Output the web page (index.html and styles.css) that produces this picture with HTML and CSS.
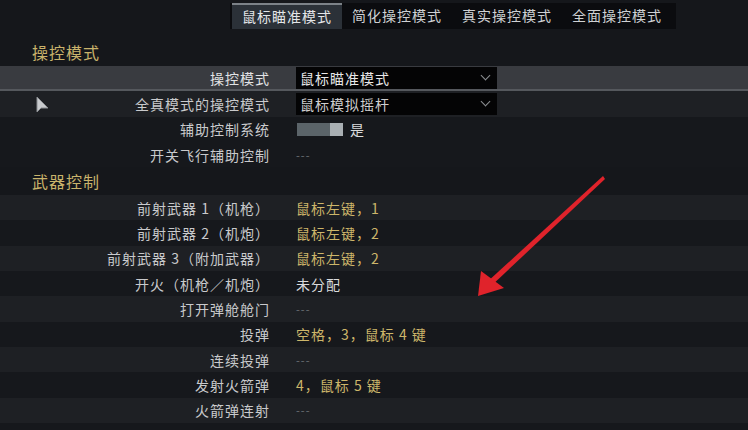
FILE: index.html
```html
<!DOCTYPE html>
<html lang="zh-CN">
<head>
    <meta charset="UTF-8">
    <title>操控设置</title>
    <link rel="stylesheet" href="styles.css">
</head>
<body>
    <div class="screen">
        <div class="tabbar">
            <div class="tabs">
                <div class="tab active">鼠标瞄准模式</div>
                <div class="tab">简化操控模式</div>
                <div class="tab">真实操控模式</div>
                <div class="tab">全面操控模式</div>
            </div>
        </div>

        <div class="section">操控模式</div>
        <div class="row hover">
            <div class="label">操控模式</div>
            <div class="value"><div class="select">鼠标瞄准模式<span class="chev"></span></div></div>
        </div>
        <div class="row odd">
            <div class="label">全真模式的操控模式</div>
            <div class="value"><div class="select dim">鼠标模拟摇杆<span class="chev"></span></div></div>
        </div>
        <div class="row">
            <div class="label">辅助控制系统</div>
            <div class="value"><span class="toggle"><span class="knob"></span></span><span class="plain">是</span></div>
        </div>
        <div class="row">
            <div class="label">开关飞行辅助控制</div>
            <div class="value none">---</div>
        </div>

        <div class="section">武器控制</div>
        <div class="row odd">
            <div class="label">前射武器 1（机枪）</div>
            <div class="value key">鼠标左键，1</div>
        </div>
        <div class="row">
            <div class="label">前射武器 2（机炮）</div>
            <div class="value key">鼠标左键，2</div>
        </div>
        <div class="row odd">
            <div class="label">前射武器 3（附加武器）</div>
            <div class="value key">鼠标左键，2</div>
        </div>
        <div class="row">
            <div class="label">开火（机枪／机炮）</div>
            <div class="value plain">未分配</div>
        </div>
        <div class="row odd">
            <div class="label">打开弹舱舱门</div>
            <div class="value none">---</div>
        </div>
        <div class="row">
            <div class="label">投弹</div>
            <div class="value key">空格，3，鼠标 4 键</div>
        </div>
        <div class="row odd">
            <div class="label">连续投弹</div>
            <div class="value none">---</div>
        </div>
        <div class="row">
            <div class="label">发射火箭弹</div>
            <div class="value key">4，鼠标 5 键</div>
        </div>
        <div class="row odd">
            <div class="label">火箭弹连射</div>
            <div class="value none">---</div>
        </div>
        <div class="row">
            <div class="label">选择火箭弹类型</div>
            <div class="value plain">未分配</div>
        </div>

        <svg class="cursor" width="16" height="20" viewBox="0 0 16 20">
            <path d="M2 2 L2 17 L6 13 L13 13 Z" fill="#c9cbce" stroke="#8a8d91" stroke-width="1"/>
        </svg>

        <svg class="arrow" width="748" height="430" viewBox="0 0 748 430">
            <path d="M603 176 L605 179 L490 287 L486 283 Z" fill="#e0232b"/>
            <path d="M478 296 L481 271 L504 288 Z" fill="#e0232b"/>
        </svg>
    </div>
</body>
</html>
```

FILE: styles.css
```css
* {
    box-sizing: border-box;
}

body {
    margin: 0;
    background-color: #15171b;
    font-family: "Noto Sans CJK SC", "Noto Sans", sans-serif;
    font-size: 14px;
    letter-spacing: 1px;
    color: #c9cacc;
}

.screen {
    position: relative;
    width: 748px;
    height: 430px;
    overflow: hidden;
}

.tabbar {
    height: 38px;
    padding-top: 3px;
    padding-left: 230px;
}

.tabs {
    display: flex;
    width: 446px;
    height: 26px;
    background-color: #0b0c0f;
    padding-left: 2px;
}

.tab {
    width: 110px;
    height: 26px;
    line-height: 24px;
    text-align: center;
    color: #cfd1d3;
    font-size: 14px;
}

.tab.active {
    background-color: #2b3138;
    border-top: 2px solid #7c8288;
    line-height: 22px;
    color: #e4e6e8;
}

.section {
    height: 28px;
    line-height: 28px;
    padding-left: 32px;
    font-size: 16px;
    color: #c9b36b;
}

.row {
    display: grid;
    grid-template-columns: 270px 1fr;
    column-gap: 26px;
    align-items: center;
    height: 25.3px;
    background-color: #16181c;
}

.row.odd {
    background-color: #1e2024;
}

.row.hover {
    background-color: #393b40;
    border-bottom: 2px solid #55585d;
}

.label {
    text-align: right;
    white-space: nowrap;
    color: #c9cacc;
}

.row.hover .label {
    color: #e2e3e5;
}

.value {
    display: flex;
    align-items: center;
    white-space: nowrap;
}

.select {
    position: relative;
    width: 201px;
    height: 22px;
    line-height: 22px;
    padding-left: 4px;
    background-color: #040405;
    color: #e8e8e8;
}

.select.dim {
    color: #cfcfcf;
}

.chev {
    position: absolute;
    right: 8px;
    top: 5px;
    width: 7px;
    height: 7px;
    border-right: 1.5px solid #8c8f93;
    border-bottom: 1.5px solid #8c8f93;
    transform: rotate(45deg);
}

.toggle {
    display: inline-block;
    width: 46px;
    height: 13px;
    background-color: #5b6469;
    position: relative;
    margin-left: 1px;
    margin-right: 7px;
}

.knob {
    position: absolute;
    right: 0;
    top: 0;
    width: 13px;
    height: 13px;
    background-color: #a9afb3;
}

.plain {
    color: #dadbdc;
}

.key {
    color: #cdb66a;
}

.none {
    color: #6f7175;
    font-size: 11px;
}

.cursor {
    position: absolute;
    left: 35px;
    top: 95px;
}

.arrow {
    position: absolute;
    left: 0;
    top: 0;
}
```
